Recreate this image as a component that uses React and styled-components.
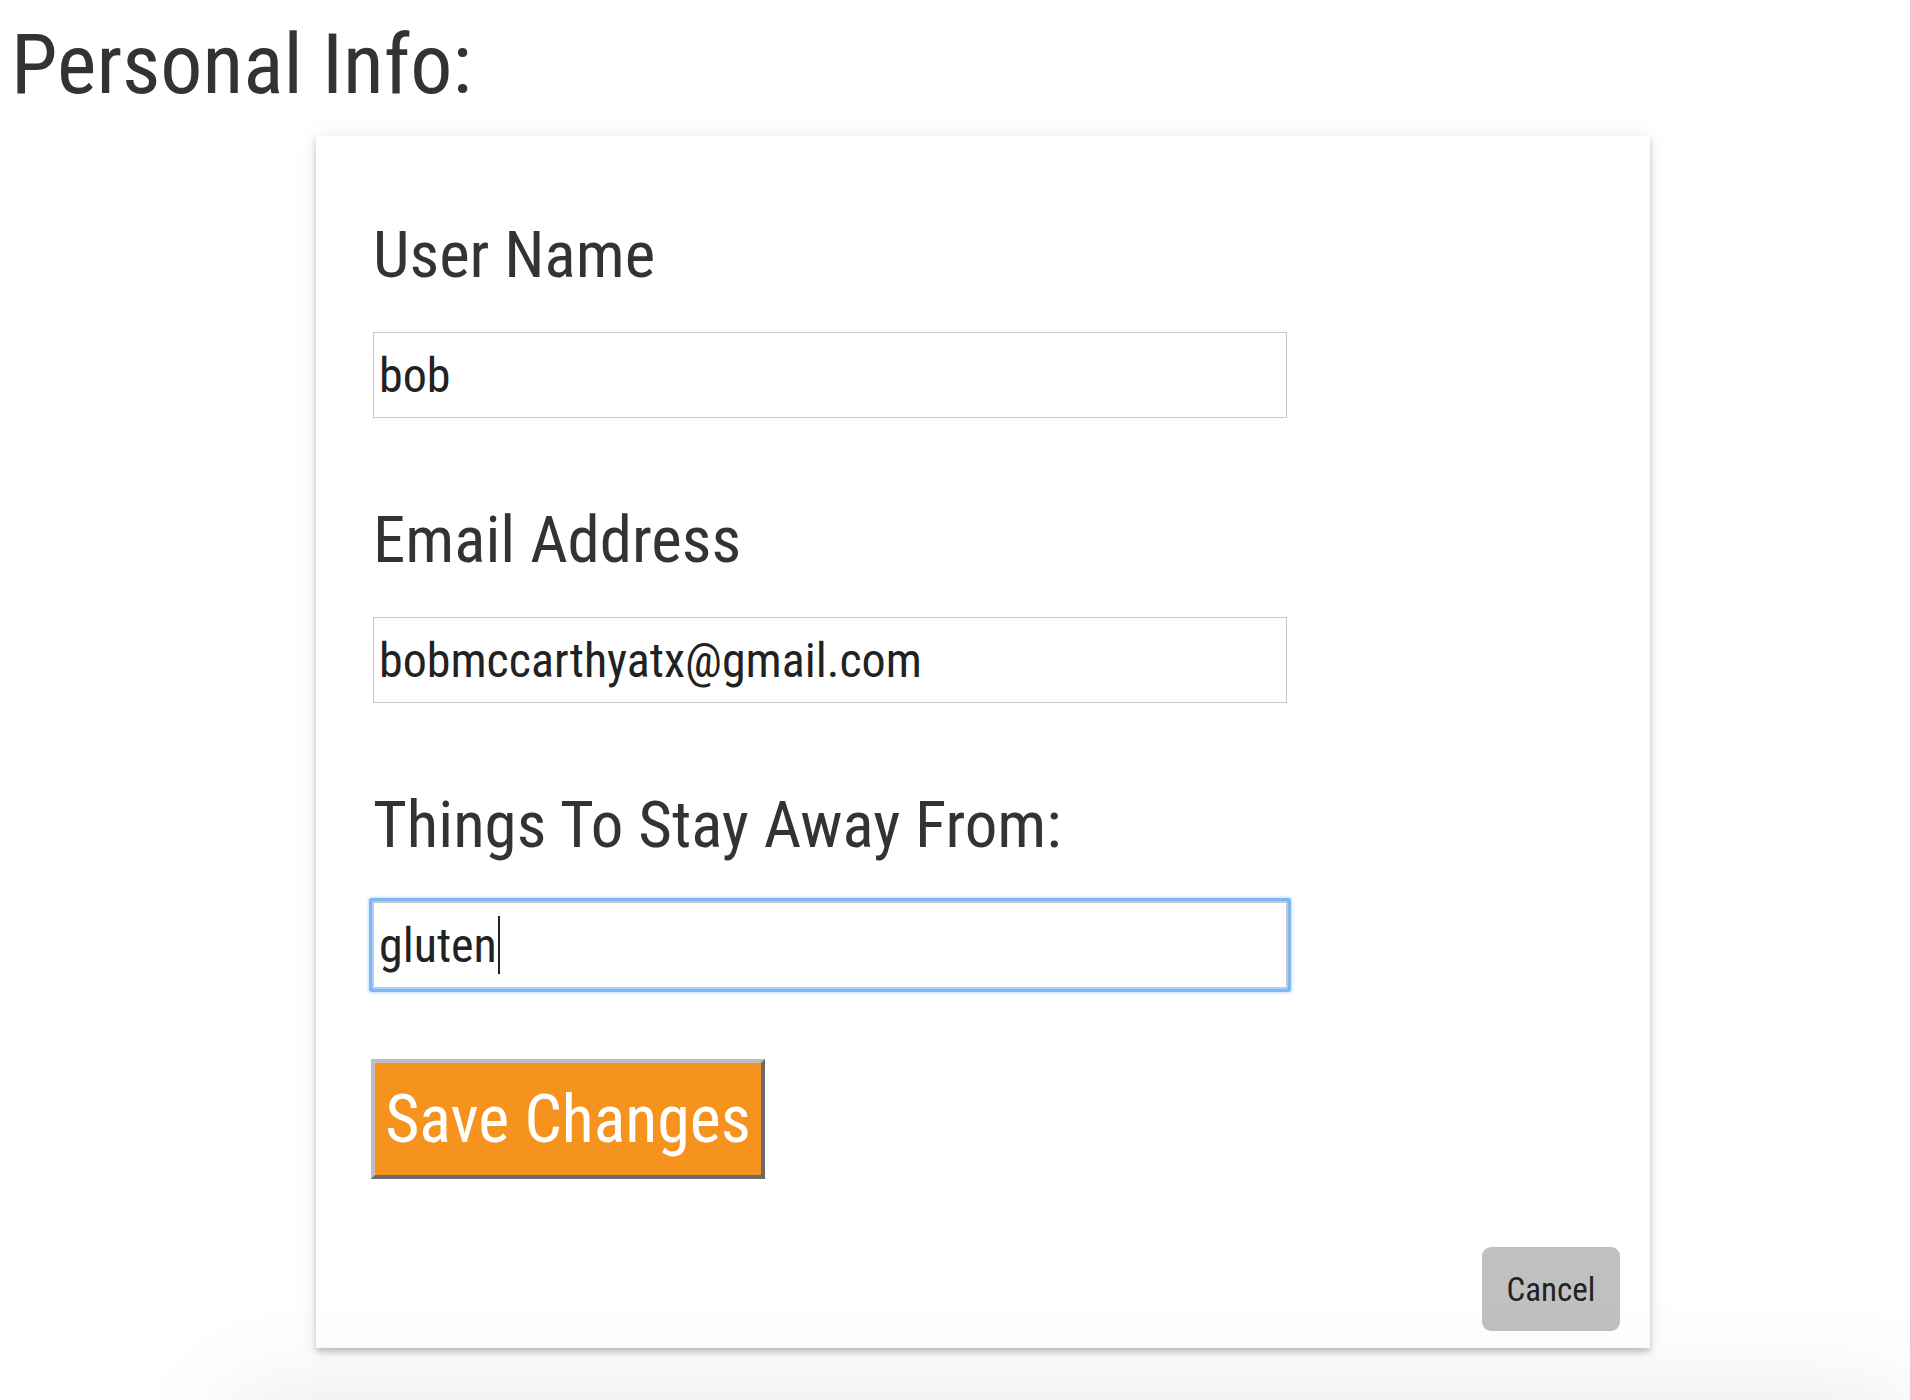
import React from 'react';
import styled, { createGlobalStyle } from 'styled-components';

const GlobalStyle = createGlobalStyle`
  body {
    margin: 0;
    background: #fff;
    color: #333;
    font-family: Roboto, "Liberation Sans", Arial, sans-serif;
    font-stretch: 75%;
  }
`;

const Page = styled.div`
  display: flex;
  flex-direction: column;
  align-items: flex-start;
  padding: 16px 0 0 11px;
`;

const Title = styled.h1`
  margin: 0 0 22px 0;
  font-size: 84px;
  line-height: 98px;
  font-weight: normal;
  color: #333;
`;

const Card = styled.div`
  box-sizing: border-box;
  display: flex;
  flex-direction: column;
  align-items: flex-start;
  width: 1334px;
  height: 1212px;
  margin-left: 305px;
  padding: 79px 30px 17px 57px;
  background: #fff;
  box-shadow: 0 4px 6px rgba(0, 0, 0, 0.22), 0 0 22px rgba(0, 0, 0, 0.07);
`;

const Field = styled.div`
  display: flex;
  flex-direction: column;

  & + & {
    margin-top: 82px;
  }
`;

const Label = styled.label`
  font-size: 65px;
  line-height: 80px;
  color: #333;
  margin-bottom: 37px;
`;

const InputWrap = styled.div`
  position: relative;
`;

const TextInput = styled.input`
  box-sizing: border-box;
  width: 914px;
  height: 86px;
  margin: 0;
  padding: 0 5px;
  border: 1px solid #c9c9c9;
  border-radius: ${p => (p.$focused ? '1px' : '0')};
  outline: none;
  background: #fff;
  color: #222;
  font-family: inherit;
  font-stretch: inherit;
  font-size: 48px;
  box-shadow: ${p => (p.$focused
    ? '0 0 0 1px #a6cdf8, 0 0 0 4px #7fb6f4, 0 0 3px 5px rgba(127, 182, 244, 0.45)'
    : 'none')};
`;

const CaretLayer = styled.div`
  position: absolute;
  top: 0;
  left: 0;
  bottom: 0;
  display: flex;
  align-items: center;
  padding-left: 6px;
  font-size: 48px;
  pointer-events: none;
`;

const Ghost = styled.span`
  visibility: hidden;
  white-space: pre;
`;

const CaretBar = styled.span`
  width: 2px;
  height: 58px;
  margin-left: 1px;
  background: #222;
`;

const SaveButton = styled.button`
  box-sizing: border-box;
  display: flex;
  align-items: center;
  justify-content: center;
  width: 394px;
  height: 120px;
  margin: 71px 0 0 -2px;
  padding: 0 4px;
  background: #f6921e;
  border: 4px solid;
  border-color: #bfbfbf #6b6b6b #6b6b6b #bfbfbf;
  color: #fff;
  font-family: inherit;
  font-stretch: inherit;
  font-size: 66px;
  white-space: nowrap;
  cursor: pointer;
`;

const Footer = styled.div`
  display: flex;
  justify-content: flex-end;
  align-self: stretch;
  margin-top: auto;
`;

const CancelButton = styled.button`
  width: 138px;
  height: 84px;
  padding: 0;
  border: none;
  border-radius: 9px;
  background: #c0c0c0;
  color: #222;
  font-family: inherit;
  font-stretch: inherit;
  font-size: 33px;
  white-space: nowrap;
  cursor: pointer;
`;

const Shelf = styled.div`
  align-self: stretch;
  height: 120px;
  margin: 52px 0 0 219px;
  background: #f1f1f1;
  box-shadow: 0 0 110px rgba(0, 0, 0, 0.1);
`;

const InputField = ({ id, label, value, focused }) => (
  <Field>
    <Label htmlFor={id}>{label}</Label>
    <InputWrap>
      <TextInput id={id} defaultValue={value} $focused={focused} />
      {focused && (
        <CaretLayer aria-hidden="true">
          <Ghost>{value}</Ghost>
          <CaretBar />
        </CaretLayer>
      )}
    </InputWrap>
  </Field>
);

const App = () => (
  <>
    <GlobalStyle />
    <Page>
      <Title>Personal Info:</Title>
      <Card>
        <InputField id="username" label="User Name" value="bob" />
        <InputField id="email" label="Email Address" value="bobmccarthyatx@gmail.com" />
        <InputField id="avoid" label="Things To Stay Away From:" value="gluten" focused />
        <SaveButton type="button">Save Changes</SaveButton>
        <Footer>
          <CancelButton type="button">Cancel</CancelButton>
        </Footer>
      </Card>
      <Shelf />
    </Page>
  </>
);

export default App;
